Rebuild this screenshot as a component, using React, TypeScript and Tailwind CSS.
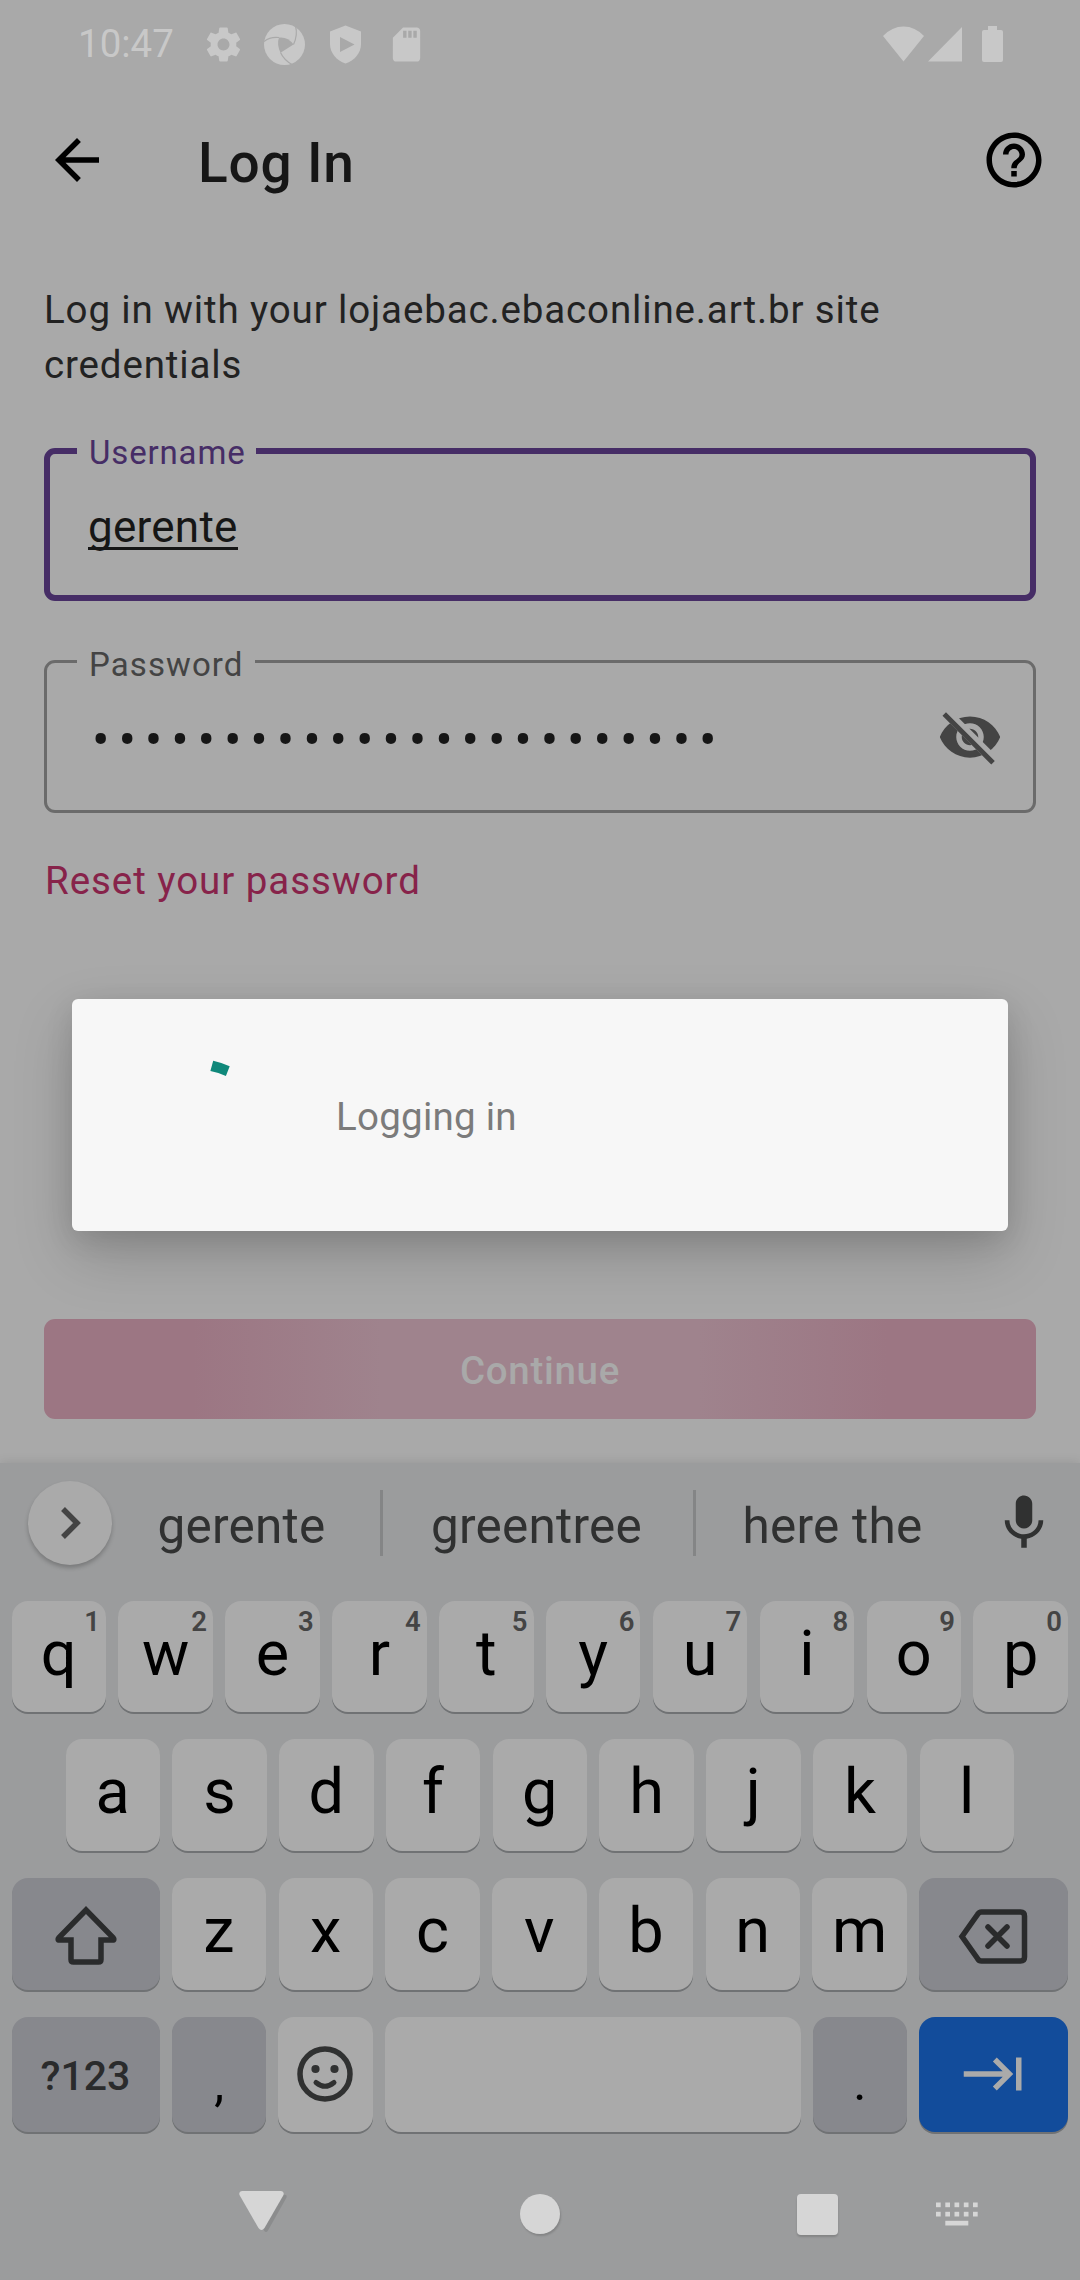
import React from "react";

function StatusBar() {
  return (
    <div className="flex h-[88px] items-center pl-[78px] pr-[77px] text-[#c8c8c8]">
      <span className="w-[98px] pt-[1px] text-[38.5px] leading-none whitespace-nowrap">10:47</span>
      <div className="ml-[27px] flex gap-5">
        <svg className="size-[41px]" viewBox="0 0 24 24" fill="currentColor">
          <path d="M19.43 12.98c.04-.32.07-.64.07-.98s-.03-.66-.07-.98l2.11-1.65c.19-.15.24-.42.12-.64l-2-3.46c-.12-.22-.39-.3-.61-.22l-2.49 1c-.52-.4-1.08-.73-1.69-.98l-.38-2.65C14.46 2.18 14.25 2 14 2h-4c-.25 0-.46.18-.49.42l-.38 2.65c-.61.25-1.17.59-1.69.98l-2.49-1c-.23-.09-.49 0-.61.22l-2 3.46c-.13.22-.07.49.12.64l2.11 1.65c-.04.32-.07.65-.07.98s.03.66.07.98l-2.11 1.65c-.19.15-.24.42-.12.64l2 3.46c.12.22.39.3.61.22l2.49-1c.52.4 1.08.73 1.69.98l.38 2.65c.03.24.24.42.49.42h4c.25 0 .46-.18.49-.42l.38-2.65c.61-.25 1.17-.59 1.69-.98l2.49 1c.23.09.49 0 .61-.22l2-3.46c.12-.22.07-.49-.12-.64l-2.11-1.65zM12 15.5c-1.93 0-3.5-1.57-3.5-3.5s1.57-3.5 3.5-3.5 3.5 1.57 3.5 3.5-1.57 3.5-3.5 3.5z" />
        </svg>
        <svg className="size-[41px]" viewBox="0 0 41 41">
          <circle cx="20.5" cy="20.5" r="20.5" fill="currentColor" />
          <path d="M15 13.500Q24 12.500 29.500 20.500L16.500 28.800Q12.500 20 15 13.500Z" fill="#a9a9a9" />
          <g fill="none" stroke="#a9a9a9" strokeWidth="1.2">
            <path d="M0 17.500Q6 12.500 15 13.500" />
            <path d="M31.500 2Q34 11 29.500 20.500" />
            <path d="M16.500 28.500Q20 36 28 40.500" />
          </g>
        </svg>
        <svg className="size-[41px]" viewBox="0 0 41 41">
          <path d="M20.5 1.500L36 7.500V20C36 29 29.500 36.500 20.500 39.500C11.500 36.500 5 29 5 20V7.500Z" fill="currentColor" />
          <path d="M15 13L29.500 20.500L15 28Z" fill="#a9a9a9" />
        </svg>
        <svg className="size-[41px]" viewBox="0 0 24 24" fill="currentColor">
          <path d="M18 2h-8L4.020 8 4 20c0 1.100.9 2 2 2h12c1.100 0 2-.9 2-2V4c0-1.100-.9-2-2-2zm-6 6h-2V4h2v4zm3 0h-2V4h2v4zm3 0h-2V4h2v4z" />
        </svg>
      </div>
      <div className="ml-auto flex items-start">
        <svg className="h-9 w-[41px]" viewBox="0 0 41 36" fill="currentColor">
          <path d="M0 10Q9 0.500 20.500 0.500T41 10L20.500 35.500Z" />
        </svg>
        <svg className="ml-1 h-9 w-[34px]" viewBox="0 0 34 36" fill="currentColor">
          <path d="M34 1V35.500H0Z" />
        </svg>
        <svg className="ml-5 h-9 w-[21px]" viewBox="0 0 21 36" fill="currentColor">
          <path d="M6 0H15V4H19Q21 4 21 6V34Q21 36 19 36H2Q0 36 0 34V6Q0 4 2 4H6Z" />
        </svg>
      </div>
    </div>
  );
}

function TopBar() {
  return (
    <div className="flex h-36 items-center pl-[44px] pr-[33px]">
      <svg className="size-[66px]" viewBox="0 0 24 24">
        <path d="M20 11H7.830l5.590-5.590L12 4l-8 8 8 8 1.410-1.410L7.830 13H20v-2z" />
      </svg>
      <h1 className="ml-[88px] pt-[6px] text-[55px] leading-none font-medium tracking-[0.8px] text-[#161616]">Log In</h1>
      <svg className="ml-auto size-[66px]" viewBox="0 0 24 24">
        <path d="M11 18h2v-2h-2v2zm1-16C6.480 2 2 6.480 2 12s4.480 10 10 10 10-4.480 10-10S17.520 2 12 2zm0 18c-4.410 0-8-3.590-8-8s3.590-8 8-8 8 3.590 8 8-3.590 8-8 8zm0-14c-2.210 0-4 1.790-4 4h2c0-1.100.9-2 2-2s2 .9 2 2c0 2-3 1.750-3 5h2c0-2.250 3-2.500 3-5 0-2.210-1.790-4-4-4z" />
      </svg>
    </div>
  );
}

function LoginForm() {
  return (
    <div className="flex flex-col px-[44px]">
      <p className="mt-[50px] text-[38.5px] leading-[55px] tracking-[0.86px] text-[#222222]">
        Log in with your lojaebac.ebaconline.art.br site
        <br />
        credentials
      </p>

      <div className="relative mt-14 flex h-[153px] items-center rounded-[11px] border-[6px] border-[#462d66] pl-[38px]">
        <span className="absolute -top-[22px] left-[27px] w-[179px] bg-[#a9a9a9] pl-[12px] text-[33px] leading-[42px] tracking-[0.85px] text-[#462d66]">
          Username
        </span>
        <span className="mt-[7px] h-[43px] border-b-[3px] border-[#161616] text-[44px] leading-[40px] tracking-[0.25px] text-[#161616]">
          gerente
        </span>
      </div>

      <div className="relative mt-[59px] flex h-[153px] items-center rounded-[11px] border-[3px] border-[#6b6b6b] pl-[45px] pr-[30px]">
        <span className="absolute -top-[19px] left-[30px] w-[178px] bg-[#a9a9a9] pl-[12px] text-[33px] leading-[42px] tracking-[1.1px] text-[#444444]">
          Password
        </span>
        <span className="mt-[9px] text-[52px] leading-none tracking-[8.850px] whitespace-nowrap text-[#161616]">••••••••••••••••••••••••</span>
        <svg className="ml-auto size-[66px] shrink-0" viewBox="0 0 24 24">
          <defs>
            <clipPath id="eye-clip">
              <path d="M2 4.270L19.730 22L22.270 19.460L4.540 1.730V1H23V23H1V4.270Z" />
            </clipPath>
          </defs>
          <path
            clipPath="url(#eye-clip)"
            fill="#444444"
            fillRule="evenodd"
            d="M12 4.500C7 4.500 2.730 7.610 1 12c1.730 4.390 6 7.500 11 7.500s9.270-3.110 11-7.500c-1.730-4.390-6-7.500-11-7.500zM12 17c-2.760 0-5-2.240-5-5s2.240-5 5-5 5 2.240 5 5-2.240 5-5 5zM12 9c-1.660 0-3 1.340-3 3s1.340 3 3 3 3-1.340 3-3-1.340-3-3-3z"
          />
          <path d="M3.270 4.270L19.740 20.740" stroke="#444444" strokeWidth="1.800" strokeLinecap="square" />
        </svg>
      </div>

      <a className="mt-[45px] pl-[1px] text-[38.5px] leading-[46px] tracking-[0.95px] text-[#87234a]">Reset your password</a>

      <button className="mt-[415px] flex h-[100px] items-center justify-center rounded-[11px] bg-[linear-gradient(90deg,#9c7683_0%,#9c7683_15%,#9f838d_34%,#9f838d_66%,#9c7683_85%,#9c7683_100%)] pt-[3px] text-[38.5px] font-medium tracking-[0.7px] text-[#a9a9a9]">
        Continue
      </button>
    </div>
  );
}

function ProgressDialog() {
  return (
    <div className="absolute left-[72px] top-[999px] flex h-[232px] w-[936px] items-center rounded-[6px] bg-[#f7f7f7] pl-[77px] shadow-[0_24px_60px_rgba(0,0,0,0.18),0_8px_28px_rgba(0,0,0,0.1)]">
      <svg className="size-[132px]" viewBox="149 1049 132 132">
        <path d="M213.200 1060.700Q221.500 1062.500 229.700 1066.300L225.900 1076Q218.500 1072.500 210.400 1071Z" fill="#0f887a" />
      </svg>
      <span className="ml-[55px] pt-[4px] text-[38.5px] leading-none tracking-[0.25px] text-[#7b7b7b]">Logging in</span>
    </div>
  );
}

function SuggestionStrip() {
  return (
    <div className="flex h-[120px] items-center pl-[28px] text-[49.5px] leading-none tracking-[0.25px] text-[#303131]">
      <div className="flex size-[84px] items-center justify-center rounded-full bg-[#aaaaaa] pl-[2px] shadow-[0_3px_4px_rgba(0,0,0,0.22)]">
        <svg className="h-[34px] w-[22px]" viewBox="0 0 22 34" fill="none" stroke="#444444" strokeWidth="5.500">
          <path d="M3 3L17 17L3 31" />
        </svg>
      </div>
      <div className="w-[268px] pr-[9px] pt-[8px] text-center">gerente</div>
      <div className="h-[66px] w-[3px] bg-[#848586]" />
      <div className="w-[310px] pr-[3px] pt-[8px] text-center">greentree</div>
      <div className="h-[66px] w-[3px] bg-[#848586]" />
      <div className="w-[274px] pr-[1px] pt-[8px] text-center">here the</div>
      <svg className="ml-[21px] size-[66px]" viewBox="0 0 24 24" fill="#303131">
        <path d="M12 14c1.660 0 3-1.340 3-3V5c0-1.660-1.340-3-3-3S9 3.340 9 5v6c0 1.660 1.340 3 3 3zm5.300-3c0 3-2.540 5.100-5.300 5.100S6.700 14 6.700 11H5c0 3.410 2.720 6.230 6 6.720V21h2v-3.280c3.280-.48 6-3.300 6-6.720h-1.700z" />
      </svg>
    </div>
  );
}

function LetterKey({ label, hint }: { label: string; hint?: string }) {
  return (
    <div className="relative flex w-[94.5px] items-center justify-center rounded-2xl bg-[#aaaaaa] pb-[7px] text-[63px] leading-none text-black shadow-[0_2px_0_#707274]">
      {label}
      {hint && <span className="absolute right-[6px] top-[7px] text-[27.500px] leading-none font-semibold text-[#444444]">{hint}</span>}
    </div>
  );
}

function Keyboard() {
  return (
    <div className="h-[817px] bg-[#9b9c9d] shadow-[0_-1px_10px_rgba(0,0,0,0.1)]">
      <SuggestionStrip />
      <div className="flex flex-col gap-[27px] pl-[11.500px] pr-[12px] pt-[18px]">
        <div className="flex h-[111px] justify-between">
          {"qwertyuiop".split("").map((c, i) => (
            <LetterKey key={c} label={c} hint={String((i + 1) % 10)} />
          ))}
        </div>
        <div className="flex h-28 justify-between px-[54px]">
          {"asdfghjkl".split("").map((c) => (
            <LetterKey key={c} label={c} />
          ))}
        </div>
        <div className="flex h-28 justify-between">
          <div className="flex w-[148px] items-center justify-center rounded-2xl bg-[#87888d] pt-[3px] shadow-[0_2px_0_#707274]">
            <svg className="h-[66px] w-[66px]" viewBox="52.500 1901 66 66" fill="none" stroke="#2a2b2c" strokeWidth="5.500">
              <path d="M85.500 1908L112.500 1935.500Q114.500 1938 112 1938H100.500V1957.500Q100.500 1960 98 1960H73Q70.500 1960 70.500 1957.500V1938H59Q56.500 1938 58.500 1935.500Z" />
            </svg>
          </div>
          {"zxcvbnm".split("").map((c) => (
            <LetterKey key={c} label={c} />
          ))}
          <div className="flex w-[149px] items-center justify-center rounded-2xl bg-[#87888d] pt-[5px] shadow-[0_2px_0_#707274]">
            <svg className="h-14 w-[72px]" viewBox="957.500 1906.500 72 56" fill="none" stroke="#2a2b2c" strokeWidth="5.500">
              <path d="M981 1909.500H1020Q1024 1909.500 1024 1913.500V1954.500Q1024 1958.500 1020 1958.500H981Q978.500 1958.500 977 1956L961.500 1934L977 1912Q978.500 1909.500 981 1909.500Z" />
              <path d="M987.500 1924.500L1006.500 1943.500M1006.500 1924.500L987.500 1943.500" strokeLinecap="round" />
            </svg>
          </div>
        </div>
        <div className="flex h-[115px] justify-between">
          <div className="flex w-[148px] items-center justify-center rounded-2xl bg-[#87888d] pt-[3px] text-[41px] leading-none font-medium text-[#2a2b2c] shadow-[0_2px_0_#707274]">
            ?123
          </div>
          <div className="flex w-[94.5px] justify-center rounded-2xl bg-[#87888d] pl-[1px] pt-[37px] text-[50px] leading-[58px] text-black shadow-[0_2px_0_#707274]">,</div>
          <div className="flex w-[94.5px] items-center justify-center rounded-2xl bg-[#aaaaaa] pb-[2px] shadow-[0_2px_0_#707274]">
            <svg className="size-[56px]" viewBox="0 0 56 56" fill="none" stroke="#303131" strokeWidth="5.500">
              <circle cx="28" cy="28" r="25" />
              <path d="M19 36.500Q28 44 37 36.500" strokeLinecap="round" strokeWidth="5" />
              <circle cx="18.500" cy="23" r="4.100" fill="#303131" stroke="none" />
              <circle cx="37.500" cy="23" r="4.100" fill="#303131" stroke="none" />
            </svg>
          </div>
          <div className="w-[416px] rounded-2xl bg-[#aaaaaa] shadow-[0_2px_0_#707274]" />
          <div className="flex w-[94.5px] justify-center rounded-2xl bg-[#87888d] pt-[37px] text-[50px] leading-[58px] text-black shadow-[0_2px_0_#707274]">.</div>
          <div className="flex w-[149px] items-center justify-center rounded-2xl bg-[#124c9b] pb-[1px] shadow-[0_2px_0_#707274]">
            <svg className="size-[66px]" viewBox="0 0 24 24" fill="#aaaaaa">
              <path d="M11.590 7.410L15.170 11H1v2h14.170l-3.590 3.590L13 18l6-6-6-6-1.410 1.410zM20 6v12h2V6h-2z" />
            </svg>
          </div>
        </div>
      </div>
      <NavigationBar />
    </div>
  );
}

function NavigationBar() {
  const columns = [0, 9.3, 18.5, 27.8, 37];
  return (
    <div className="mt-4 flex h-[132px] items-center pl-[228px]">
      <svg className="size-[66px]" viewBox="0 0 66 66">
        <path d="M16.500 13.500H55.500Q59.500 13.500 58.500 16.500L40 49.500Q38 52.500 36 49.500Z" fill="#8b8c8d" />
        <path d="M14 10H53Q56.500 10.500 55.500 14L36.500 47Q33.500 51 30.500 47L11.500 14Q10.500 10.500 14 10Z" fill="#d6d6d6" />
      </svg>
      <div className="ml-[226px] size-10 rounded-full bg-[#d6d6d6] shadow-[1px_2px_2px_rgba(0,0,0,0.15)]" />
      <div className="ml-[237px] h-[41px] w-[41px] rounded-[4px] bg-[#d6d6d6] shadow-[0_2px_2px_rgba(0,0,0,0.15)]" />
      <svg className="ml-[98px] h-6 w-[42px]" viewBox="0 0 42 24" fill="#d6d6d6">
        {columns.map((x) => (
          <g key={x}>
            <rect x={x} y="0.500" width="4.700" height="4.700" />
            <rect x={x} y="9.800" width="4.700" height="4.700" />
          </g>
        ))}
        <rect x="9.300" y="18.800" width="23" height="4.700" />
      </svg>
    </div>
  );
}

export default function App() {
  return (
    <div className="relative h-[2280px] w-[1080px] overflow-hidden bg-[#a9a9a9] font-['Roboto',sans-serif]">
      <div className="h-[1463px]">
        <StatusBar />
        <TopBar />
        <LoginForm />
      </div>
      <Keyboard />
      <ProgressDialog />
    </div>
  );
}
